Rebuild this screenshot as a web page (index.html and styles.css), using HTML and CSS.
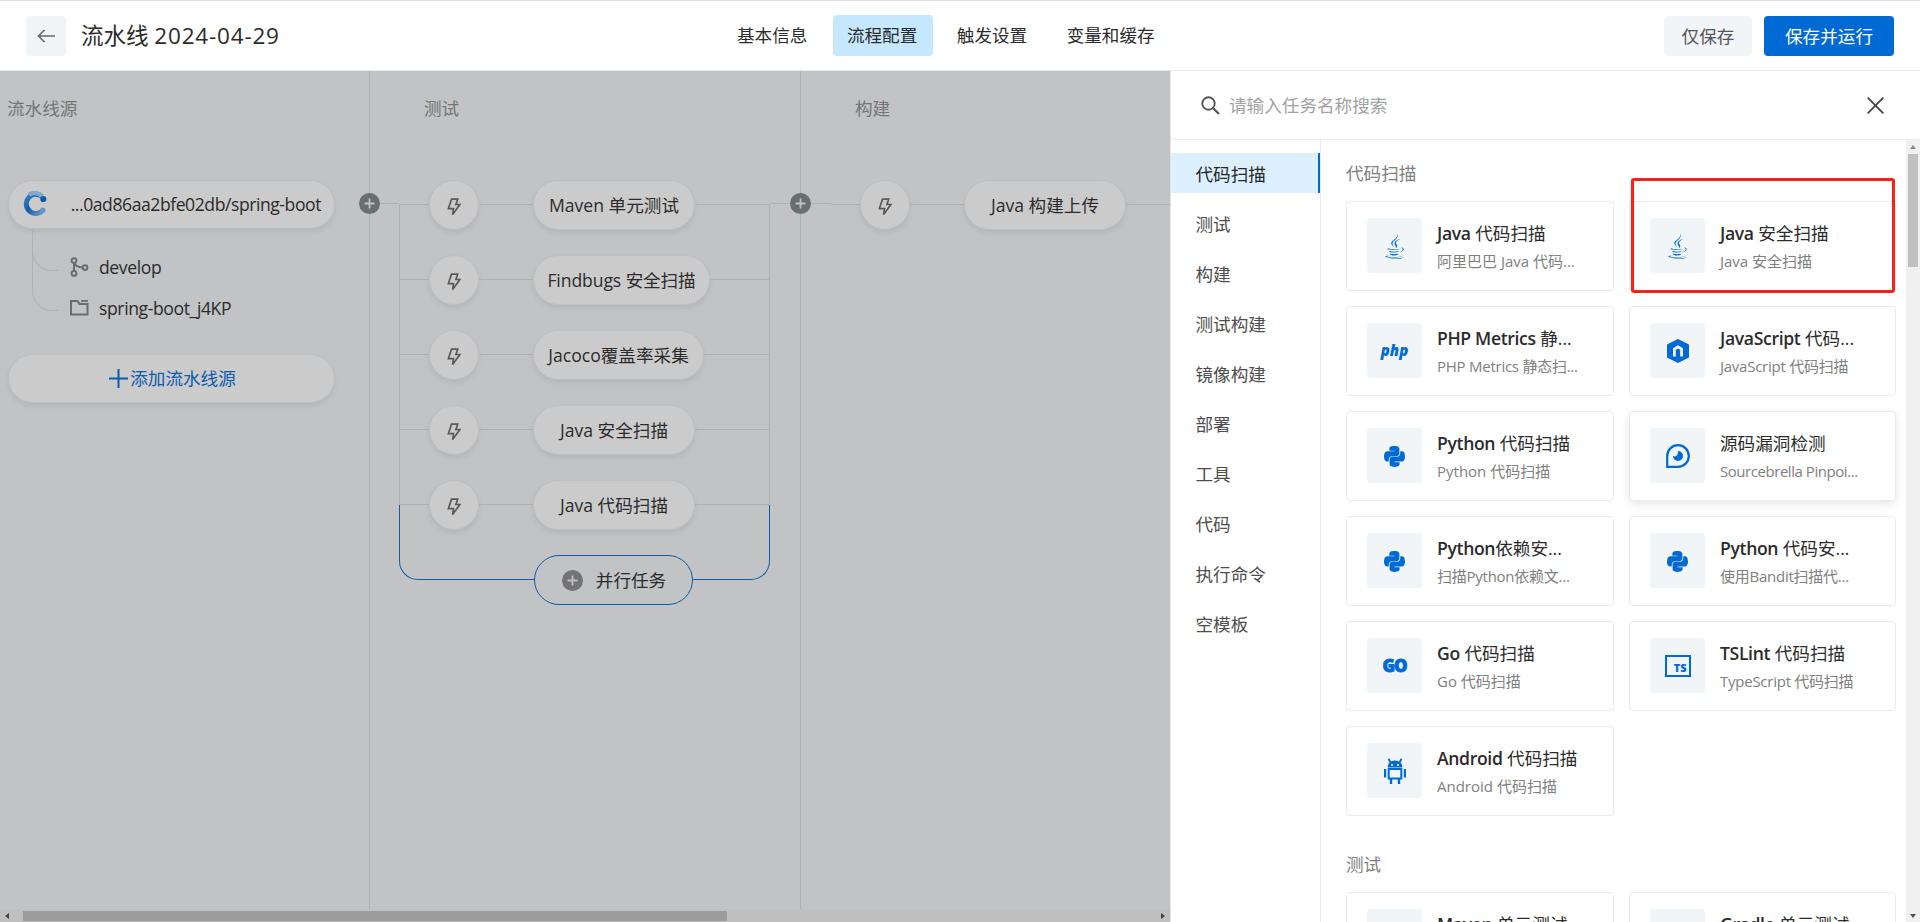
FILE: index.html
```html
<!DOCTYPE html>
<html lang="zh-CN">
<head>
  <meta charset="utf-8">
  <title>流水线 2024-04-29</title>
  <link rel="stylesheet" href="styles.css">
</head>
<body>
  <svg class="sprite">
    <symbol id="bolt" viewBox="0 0 14 18"><path d="M4.5 1.2h6.2L8.9 6.5h4L5.6 16.6l.9-6H1.4z" fill="none" stroke="currentColor" stroke-width="1.7"/></symbol>
    <symbol id="plus" viewBox="0 0 21 21"><circle cx="10.5" cy="10.5" r="10.5" fill="currentColor"/><path d="M10.5 5.5v10M5.5 10.5h10" stroke="#bfc1c3" stroke-width="1.8"/></symbol>
    <symbol id="java" viewBox="0 0 384 512"><path d="M277.74 312.9c9.8-6.7 23.4-12.5 23.4-12.5s-38.7 7-77.2 10.2c-47.1 3.9-97.7 4.7-123.1 1.3-60.1-8 33-30.1 33-30.1s-36.1-2.4-80.6 19c-52.5 25.4 130 37 224.5 12.1zm-85.4-32.1c-19-42.7-83.1-80.2 0-145.8C296 53.2 242.84 0 242.84 0c21.5 84.5-75.6 110.1-110.7 162.6-23.9 35.9 11.7 74.4 60.2 118.2zm114.6-176.2c.1 0-175.2 43.8-91.5 140.2 24.7 28.4-6.5 54-6.5 54s62.7-32.4 33.9-72.9c-26.9-37.8-47.5-56.6 64.1-121.3zm-6.1 270.5a12.19 12.19 0 0 1-2 2.6c128.3-33.7 81.1-118.9 19.8-97.3a17.33 17.33 0 0 0-8.2 6.3 70.45 70.45 0 0 1 11-3c31-6.5 75.5 41.5-20.6 91.4zM348 437.4s14.5 11.9-15.9 21.2c-57.9 17.5-240.8 22.8-291.6.7-18.3-7.9 16-19 26.8-21.3 11.2-2.4 17.7-2 17.7-2-20.3-14.3-131.3 28.1-56.4 40.2C232.84 509.4 401 461.3 348 437.4zM124.44 396c-78.7 22 47.9 67.4 148.1 24.5a185.89 185.89 0 0 1-28.2-13.8c-44.7 8.5-65.4 9.1-106 4.5-33.5-3.8-13.9-15.2-13.9-15.2zm179.8 97.2c-78.7 14.8-175.8 13.1-233.3 3.6 0-.1 11.8 9.7 72.4 13.6 92.2 5.9 233.8-3.3 237.1-46.9 0 0-6.4 16.5-76.2 29.7zM260.64 353c-59.2 11.4-93.5 11.1-136.8 6.6-33.5-3.5-11.6-19.7-11.6-19.7-86.8 28.8 48.2 61.4 169.5 25.9a60.37 60.37 0 0 1-21.1-12.8z" fill="currentColor"/></symbol>
    <symbol id="python" viewBox="0 32 448 448"><path d="M439.8 200.5c-7.7-30.9-22.3-54.2-53.4-54.2h-40.1v47.4c0 36.8-31.2 67.8-66.8 67.8H172.7c-29.2 0-53.4 25-53.4 54.3v101.8c0 29 25.2 46 53.4 54.3 33.8 9.9 66.3 11.7 106.8 0 26.9-7.8 53.4-23.5 53.4-54.3v-40.7H226.2v-13.6h160.2c31.1 0 42.6-21.7 53.4-54.2 11.2-33.5 10.7-65.7 0-108.6zM167.8 248.1h106.8c29.7 0 53.4-24.5 53.4-54.3V91.9c0-29-24.4-50.7-53.4-55.6-35.8-5.9-74.7-5.6-106.8.1-45.2 8-53.4 24.7-53.4 55.6v40.7h106.9v13.6h-147c-31.1 0-58.3 18.7-66.8 54.2-9.8 40.7-10.2 66.1 0 108.6 7.6 31.6 25.7 54.2 56.8 54.2H101v-48.8c0-35.3 30.5-66.4 66.8-66.4z" fill="currentColor"/></symbol>
  </svg>

  <header class="topbar">
    <div class="topbar-left">
      <button class="back" type="button"><svg width="18" height="14" viewBox="0 0 18 14"><path d="M18 7H1.5M7.5 1L1.5 7l6 6" fill="none" stroke="#666" stroke-width="1.6"/></svg></button>
      <h1>流水线 <span>2024-04-29</span></h1>
    </div>
    <nav class="tabs">
      <a>基本信息</a>
      <a class="active">流程配置</a>
      <a>触发设置</a>
      <a>变量和缓存</a>
    </nav>
    <div class="actions">
      <button class="btn" type="button">仅保存</button>
      <button class="btn primary" type="button">保存并运行</button>
    </div>
  </header>

  <main class="main">
    <section class="canvas">
      <div class="stages">
        <div class="stage source">
          <h2>流水线源</h2>
          <div class="pill source-pill">
            <svg width="24" height="25" viewBox="0 0 24 25">
              <defs><linearGradient id="cg" x1="0" y1="0" x2="1" y2="1"><stop offset="0" stop-color="#3d7fbe"/><stop offset=".45" stop-color="#0f5cab"/><stop offset="1" stop-color="#6f9cc8"/></linearGradient></defs>
              <path d="M20.5 18.8a9.6 9.6 0 1 1-1.6-13.4" fill="none" stroke="url(#cg)" stroke-width="5"/>
              <path d="M6 3.8a9.6 9.6 0 0 1 12.9 1.6" fill="none" stroke="#82a8cd" stroke-width="4.6"/>
              <circle cx="20.3" cy="8" r="3.1" fill="#0c5aac"/>
              <circle cx="19.8" cy="19.2" r="2.6" fill="#6896c4"/>
            </svg>
            <span>...0ad86aa2bfe02db/spring-boot</span>
          </div>
          <ul class="meta">
            <li><svg width="19" height="20" viewBox="0 0 19 20"><g fill="none" stroke="#6c6c6c" stroke-width="2"><circle cx="4" cy="3.6" r="2.4"/><circle cx="4" cy="16.4" r="2.4"/><circle cx="15" cy="10.6" r="2.4"/><path d="M4 6v8M4.3 6.2c1 2.6 3.6 4 8.2 4.2"/></g></svg>develop</li>
            <li><svg width="19" height="16" viewBox="0 0 19 16"><path d="M1 1h6.5l2 3h8v10.500H1z" fill="none" stroke="#6c6c6c" stroke-width="2"/><path d="M11 1h7" stroke="#6c6c6c" stroke-width="1.8"/></svg>spring-boot_j4KP</li>
          </ul>
          <div class="pill add-pill"><svg width="19" height="19" viewBox="0 0 19 19"><path d="M9.500 0v19M0 9.500h19" stroke="#0d5bb0" stroke-width="2"/></svg>添加流水线源</div>
          <svg class="stage-plus" width="21" height="21"><use href="#plus"/></svg>
        </div>

        <div class="stage test">
          <h2>测试</h2>
          <div class="group">
            <div class="row"><i class="wire lead"></i><div class="node"><svg width="14" height="18"><use href="#bolt"/></svg></div><i class="wire mid"></i><div class="pill job">Maven 单元测试</div><i class="wire"></i></div>
            <div class="row"><i class="wire lead"></i><div class="node"><svg width="14" height="18"><use href="#bolt"/></svg></div><i class="wire mid"></i><div class="pill job wide">Findbugs 安全扫描</div><i class="wire"></i></div>
            <div class="row"><i class="wire lead"></i><div class="node"><svg width="14" height="18"><use href="#bolt"/></svg></div><i class="wire mid"></i><div class="pill job medium">Jacoco覆盖率采集</div><i class="wire"></i></div>
            <div class="row"><i class="wire lead"></i><div class="node"><svg width="14" height="18"><use href="#bolt"/></svg></div><i class="wire mid"></i><div class="pill job">Java 安全扫描</div><i class="wire"></i></div>
            <div class="row"><i class="wire lead"></i><div class="node"><svg width="14" height="18"><use href="#bolt"/></svg></div><i class="wire mid"></i><div class="pill job">Java 代码扫描</div><i class="wire"></i></div>
            <div class="parallel"><svg width="21" height="21"><use href="#plus"/></svg>并行任务</div>
          </div>
          <svg class="stage-plus" width="21" height="21"><use href="#plus"/></svg>
        </div>

        <div class="stage build">
          <h2>构建</h2>
          <div class="row"><i class="wire first"></i><i class="wire lead"></i><div class="node"><svg width="14" height="18"><use href="#bolt"/></svg></div><i class="wire mid"></i><div class="pill job">Java 构建上传</div><i class="wire"></i></div>
        </div>
      </div>
      <div class="hscroll"><i class="arrow left"></i><i class="thumb"></i><i class="arrow right"></i></div>
    </section>

    <aside class="panel">
      <div class="search">
        <svg width="19" height="19" viewBox="0 0 19 19"><circle cx="7.500" cy="7.500" r="6.200" fill="none" stroke="#555" stroke-width="1.9"/><path d="M12 12l6 6" stroke="#555" stroke-width="2.2"/></svg>
        <span>请输入任务名称搜索</span>
        <svg width="17" height="18" viewBox="0 0 17 18"><path d="M.7 1.700l15.600 15.600M16.300 1.700L.7 17.300" stroke="#444" stroke-width="1.8"/></svg>
      </div>
      <div class="panel-body">
        <ul class="cats">
          <li class="active">代码扫描</li>
          <li>测试</li>
          <li>构建</li>
          <li>测试构建</li>
          <li>镜像构建</li>
          <li>部署</li>
          <li>工具</li>
          <li>代码</li>
          <li>执行命令</li>
          <li>空模板</li>
        </ul>
        <div class="list">
          <h3>代码扫描</h3>
          <div class="cards">
            <div class="card"><div class="icon"><svg width="19" height="25"><use href="#java"/></svg></div><div class="txt"><h4><b>Java</b> 代码扫描</h4><p>阿里巴巴 Java 代码...</p></div></div>
            <div class="card marked"><div class="icon"><svg width="19" height="25"><use href="#java"/></svg></div><div class="txt"><h4><b>Java</b> 安全扫描</h4><p>Java 安全扫描</p></div></div>
            <div class="card"><div class="icon"><span class="php">php</span></div><div class="txt"><h4><b>PHP Metrics</b> 静...</h4><p class="tight">PHP Metrics 静态扫...</p></div></div>
            <div class="card"><div class="icon"><svg width="22" height="24" viewBox="0 0 22 24"><path d="M11 0l11 5.500v13L11 24 0 18.500v-13z" fill="currentColor"/><path d="M7.400 17.600V10L11 7.900l3.600 2.100v7.600" fill="none" stroke="#f1f5f8" stroke-width="2.8"/></svg></div><div class="txt"><h4><b>JavaScript</b> 代码...</h4><p class="tight">JavaScript 代码扫描</p></div></div>
            <div class="card"><div class="icon"><svg width="21" height="21"><use href="#python"/></svg></div><div class="txt"><h4><b>Python</b> 代码扫描</h4><p>Python 代码扫描</p></div></div>
            <div class="card raised"><div class="icon"><svg width="24" height="24" viewBox="0 0 24 24"><path d="M1.200 22.800V12A10.800 10.800 0 1 1 12 22.800z" fill="none" stroke="currentColor" stroke-width="2.2"/><path d="M12 7a5 5 0 1 1-5 5c1.200.6 2.600.5 3.500-.2C11.500 11 12.200 9 12 7z" fill="currentColor"/></svg></div><div class="txt"><h4>源码漏洞检测</h4><p class="tighter">Sourcebrella Pinpoi...</p></div></div>
            <div class="card"><div class="icon"><svg width="21" height="21"><use href="#python"/></svg></div><div class="txt"><h4><b>Python</b>依赖安...</h4><p class="tight">扫描Python依赖文...</p></div></div>
            <div class="card"><div class="icon"><svg width="21" height="21"><use href="#python"/></svg></div><div class="txt"><h4><b>Python</b> 代码安...</h4><p class="tight">使用Bandit扫描代...</p></div></div>
            <div class="card"><div class="icon"><span class="go">GO</span></div><div class="txt"><h4><b>Go</b> 代码扫描</h4><p>Go 代码扫描</p></div></div>
            <div class="card"><div class="icon"><span class="ts">TS</span></div><div class="txt"><h4><b>TSLint</b> 代码扫描</h4><p class="tight">TypeScript 代码扫描</p></div></div>
            <div class="card"><div class="icon"><svg width="22" height="26" viewBox="0 0 22 26"><g fill="currentColor"><path d="M3.700 9.500C3.700 5 6.800 2.500 11 2.500s7.300 2.500 7.300 7z"/><path d="M0 11h2.200v8.500H0zM19.800 11H22v8.500h-2.200zM5.800 21h2.400v5H5.800zM13.800 21h2.400v5h-2.400z"/></g><path d="M4.700 11v9.500h12.600V11z" fill="none" stroke="currentColor" stroke-width="2"/><path d="M6.500 4.500L4.500.8M15.500 4.500l2-3.700" stroke="currentColor" stroke-width="1.8"/><circle cx="8" cy="7" r="1.100" fill="#f1f5f8"/><circle cx="14" cy="7" r="1.100" fill="#f1f5f8"/></svg></div><div class="txt"><h4><b>Android</b> 代码扫描</h4><p>Android 代码扫描</p></div></div>
          </div>
          <h3 class="second">测试</h3>
          <div class="cards">
            <div class="card"><div class="icon"></div><div class="txt"><h4><b>Maven</b> 单元测试</h4></div></div>
            <div class="card"><div class="icon"></div><div class="txt"><h4><b>Gradle</b> 单元测试</h4></div></div>
          </div>
        </div>
        <div class="vscroll"><i class="arrow up"></i><i class="thumb"></i><i class="arrow down"></i></div>
      </div>
    </aside>
  </main>
</body>
</html>
```
FILE: styles.css
```css
*, *::before, *::after {
  box-sizing: border-box;
}

body {
  margin: 0;
  width: 1920px;
  height: 922px;
  overflow: hidden;
  display: flex;
  flex-direction: column;
  background: #fff;
  color: #2b2b2b;
  font-family: "Open Sans", "Noto Sans CJK SC", sans-serif;
  font-size: 17.6px;
  line-height: 24px;
}

h1, h2, h3, h4, p, ul {
  margin: 0;
  padding: 0;
  font-weight: 400;
  list-style: none;
}

svg {
  display: block;
  flex: none;
}

button {
  border: 0;
  padding: 0;
  font: inherit;
}

.sprite {
  position: absolute;
  width: 0;
  height: 0;
}

/* top bar */
.topbar {
  height: 71px;
  flex: none;
  display: grid;
  grid-template-columns: 723px 1fr auto;
  align-items: center;
  border-top: 1px solid #dfdfdf;
  border-bottom: 1px solid #e6eaed;
}

.topbar-left {
  display: flex;
  align-items: center;
  gap: 15px;
  padding-left: 26px;
}

.back {
  width: 40px;
  height: 40px;
  display: flex;
  align-items: center;
  justify-content: center;
  border-radius: 4px;
  background: #f1f5f8;
}

h1 {
  font-size: 22.5px;
  line-height: 40px;
}

h1 span {
  letter-spacing: .8px;
}

.tabs {
  display: flex;
  gap: 10px;
}

.tabs a {
  height: 41px;
  padding: 0 15.5px 0 14px;
  line-height: 41px;
  border-radius: 4px;
}

.tabs .active {
  background: #c5e8ff;
}

.actions {
  display: flex;
  gap: 12px;
  padding-right: 26px;
}

.btn {
  width: 88px;
  height: 40px;
  border-radius: 4px;
  background: #f1f5f8;
  color: #555;
}

.btn.primary {
  width: 130px;
  background: #006ad4;
  color: #fff;
}

/* pipeline canvas */
.main {
  flex: 1;
  min-height: 0;
  display: flex;
}

.canvas {
  width: 1170px;
  display: flex;
  flex-direction: column;
  background: #c1c3c5;
}

.stages {
  flex: 1;
  display: flex;
}

.stage {
  position: relative;
  border-right: 1px solid #adb0b4;
}

.stage h2 {
  height: 109px;
  padding-top: 25px;
  font-size: 17.6px;
  color: #747678;
}

.source {
  width: 370px;
  padding-left: 8px;
}

.source h2 {
  margin-left: -1px;
}

.test {
  width: 431px;
}

.test h2, .build h2 {
  padding-left: 54px;
}

.build {
  width: 369px;
  border-right: 0;
}

.stage-plus {
  position: absolute;
  top: 122px;
  right: -11px;
  z-index: 1;
  color: #696e71;
}

.pill, .node {
  height: 50px;
  display: flex;
  align-items: center;
  justify-content: center;
  flex: none;
  background: #cbcbcb;
  border: 1px solid #bbbfc2;
  border-radius: 25px;
  box-shadow: 0 3px 5px rgba(0, 0, 0, .07);
}

.source-pill, .add-pill {
  width: 327px;
}

.source-pill {
  height: 49px;
  justify-content: space-between;
  padding: 0 13px 2px 14px;
  letter-spacing: -.45px;
}

.meta {
  height: 125px;
  padding: 23px 0 0 62px;
  position: relative;
}

.meta li {
  height: 41px;
  display: flex;
  gap: 10px;
  align-items: center;
  padding-bottom: 12px;
  letter-spacing: -.4px;
}

.meta::before, .meta::after {
  content: "";
  position: absolute;
  left: 24px;
  top: 0;
  width: 26px;
  height: 42px;
  border: 1px solid #afb2b5;
  border-top: 0;
  border-right: 0;
  border-bottom-left-radius: 20px;
}

.meta::after {
  height: 82px;
}

.add-pill {
  height: 49px;
  padding: 0 0 1px 2px;
  gap: 2px;
  color: #0d5bb0;
}

.group {
  position: relative;
  margin-left: 29px;
  width: 371px;
  padding: 0 1px;
}

.group::before {
  content: "";
  position: absolute;
  inset: 24px 0 auto 0;
  height: 301px;
  border: 1px solid #adb0b4;
  border-width: 0 1px;
}

.group::after {
  content: "";
  position: absolute;
  inset: 325px 0 auto 0;
  height: 75px;
  border: 1px solid #0f5cab;
  border-top: 0;
  border-radius: 0 0 19px 19px;
}

/* short links between the stage dividers and the group */
.test::before, .test::after {
  content: "";
  position: absolute;
  top: 132px;
  left: 0;
  width: 29px;
  height: 1px;
  background: #adb0b4;
}

.test::after {
  left: 400px;
}

.row {
  height: 50px;
  margin-bottom: 25px;
  display: flex;
  align-items: center;
}

.wire {
  flex: 1;
  height: 1px;
  margin-bottom: 1px;
  background: #adb0b4;
}

.wire.lead {
  flex: none;
  width: 29px;
}

.wire.first {
  flex: none;
  width: 30px;
  margin-bottom: 3px;
}

.wire.mid {
  flex: none;
  width: 54px;
}

.node {
  width: 50px;
  padding-top: 4px;
  color: #5a5a5a;
}

.job {
  width: 162px;
}

.job.wide {
  width: 177px;
  letter-spacing: -.1px;
}

.job.medium {
  width: 171px;
}

.parallel {
  position: relative;
  z-index: 1;
  width: 159px;
  height: 50px;
  margin-left: 134px;
  padding-left: 1px;
  display: flex;
  align-items: center;
  justify-content: center;
  gap: 13px;
  background: #c1c3c5;
  border: 1px solid #0f5cab;
  border-radius: 25px;
}

.parallel svg {
  color: #737373;
}

/* scrollbars */
.hscroll {
  height: 13px;
  display: flex;
  align-items: center;
  padding: 0 5px;
  background: #c0c0c0;
}

.hscroll .thumb {
  width: 704px;
  height: 10px;
  margin: 0 auto 0 14px;
  background: #9b9b9b;
}

.arrow {
  border: 3px solid transparent;
}

.arrow.left {
  border-left: 0;
  border-right: 4px solid #414141;
}

.arrow.right {
  border-right: 0;
  border-left: 4px solid #414141;
}

.arrow.up {
  border-top: 0;
  border-bottom: 4px solid #8b8b8b;
}

.arrow.down {
  border-bottom: 0;
  border-top: 4px solid #505050;
  margin-top: auto;
}

.vscroll {
  width: 14px;
  display: flex;
  flex-direction: column;
  align-items: center;
  padding: 5px 0 4px;
  background: #f0f0f0;
}

.vscroll .thumb {
  width: 10px;
  height: 113px;
  margin-top: 5px;
  background: #c1c1c1;
}

/* task panel */
.panel {
  flex: 1;
  display: flex;
  flex-direction: column;
  min-width: 0;
  border-left: 1px solid #e1e4e7;
  background: #fff;
}

.search {
  height: 69px;
  flex: none;
  display: flex;
  align-items: center;
  gap: 9px;
  padding: 0 36px 0 30px;
  border-bottom: 1px solid #e9ecee;
  color: #a2a2a2;
}

.search span {
  flex: 1;
}

.panel-body {
  flex: 1;
  min-height: 0;
  display: flex;
}

.cats {
  width: 150px;
  padding-top: 13px;
  border-right: 1px solid #e9ecee;
  color: #4d4d4d;
}

.cats li {
  height: 40px;
  margin-bottom: 10px;
  padding: 1px 0 0 24.5px;
  line-height: 40px;
}

.cats .active {
  background: #dcf0ff;
  border-right: 2px solid #006ad4;
  color: #262626;
}

.list {
  width: 585px;
  overflow: hidden;
  padding: 21px 9px 0 25px;
}

h3 {
  font-size: 17.6px;
  line-height: 24px;
  margin-bottom: 16px;
  color: #808080;
}

h3.second {
  margin-top: 36px;
}

.cards {
  display: grid;
  grid-template-columns: 268px 267px;
  gap: 15px;
}

.card {
  position: relative;
  height: 90px;
  display: flex;
  gap: 15px;
  padding: 16px 20px;
  border: 1px solid #e8ebee;
  border-radius: 4px;
}

.card.raised {
  box-shadow: 0 3px 10px rgba(0, 0, 0, .1);
}

/* red frame round the highlighted task */
.card.marked::after {
  content: "";
  position: absolute;
  left: 1px;
  top: -24px;
  width: 264px;
  height: 115px;
  border: 3px solid #ff2014;
  border-radius: 3px;
}

.icon {
  width: 55px;
  height: 55px;
  flex: none;
  display: flex;
  align-items: center;
  justify-content: center;
  padding-top: 1px;
  border-radius: 4px;
  background: #f1f5f8;
  color: #006ad4;
}

.txt {
  white-space: nowrap;
}

.txt h4 {
  margin-top: 3px;
  font-size: 17.6px;
}

.txt b {
  font-weight: 600;
  letter-spacing: -.35px;
}

.txt p {
  margin-top: 5px;
  font-size: 15px;
  line-height: 22px;
  color: #808080;
}

.txt .tight {
  letter-spacing: -.25px;
}

.txt .tighter {
  letter-spacing: -.45px;
}

.php {
  font: italic 800 15px/20px "Open Sans", sans-serif;
  margin-top: -2px;
}

.go {
  font: 800 17px/20px "Open Sans", sans-serif;
  letter-spacing: -1px;
  -webkit-text-stroke: .8px #006ad4;
}

.ts {
  width: 26px;
  height: 22px;
  padding: 5px 2px 0 0;
  border: 2px solid #006ad4;
  font: 800 11px/12px "Open Sans", sans-serif;
  text-align: right;
}
```
